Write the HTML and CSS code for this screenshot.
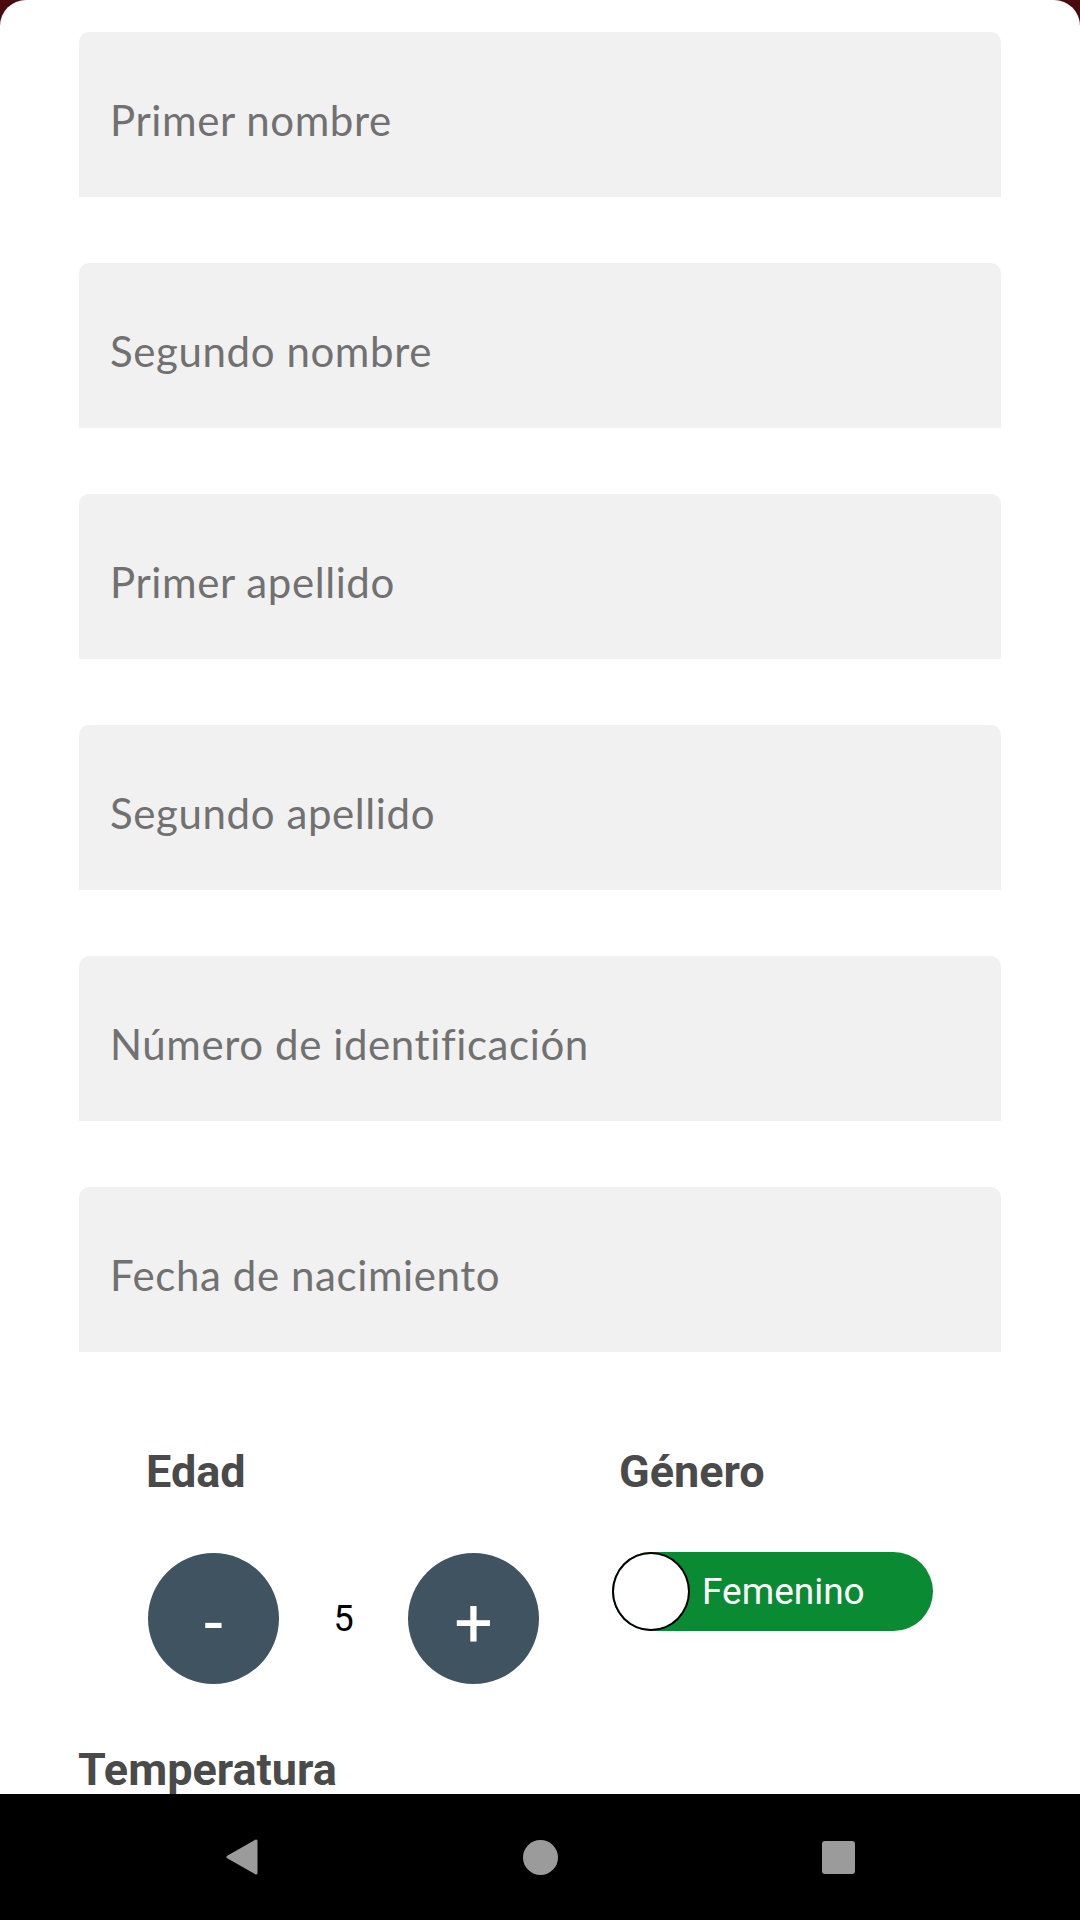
FILE: index.html
```html
<!DOCTYPE html>
<html lang="es">
<head>
<meta charset="utf-8">
<title>Formulario</title>
<link rel="stylesheet" href="styles.css">
</head>
<body>
<div class="screen">
  <main class="card">
    <div class="fields">
      <div class="field"><span class="placeholder">Primer nombre</span></div>
      <div class="field"><span class="placeholder">Segundo nombre</span></div>
      <div class="field"><span class="placeholder">Primer apellido</span></div>
      <div class="field"><span class="placeholder">Segundo apellido</span></div>
      <div class="field"><span class="placeholder">Número de identificación</span></div>
      <div class="field"><span class="placeholder">Fecha de nacimiento</span></div>
    </div>
    <section class="row">
      <div class="col col-age">
        <h2 class="label label-age">Edad</h2>
        <div class="stepper">
          <div class="circle-btn minus">-</div>
          <span class="value">5</span>
          <div class="circle-btn plus">+</div>
        </div>
      </div>
      <div class="col col-gender">
        <h2 class="label label-gender">Género</h2>
        <div class="toggle">
          <span class="knob"></span>
          <span class="toggle-text">Femenino</span>
        </div>
      </div>
    </section>
    <h2 class="label label-temp">Temperatura</h2>
  </main>
  <nav class="navbar">
    <span class="nav-item">
      <svg width="36" height="40" viewBox="0 0 36 40"><polygon points="32,4 32,36 4,20" fill="#9b9b9b" stroke="#9b9b9b" stroke-width="3" stroke-linejoin="round"/></svg>
    </span>
    <span class="nav-item"><span class="home-dot"></span></span>
    <span class="nav-item"><span class="recent-sq"></span></span>
  </nav>
</div>
</body>
</html>
```

FILE: styles.css
```css
html, body {
  margin: 0;
  padding: 0;
}
body {
  background: #4a0b0c;
  width: 1080px;
  height: 1920px;
  overflow: hidden;
}
.screen {
  width: 1080px;
  height: 1920px;
  display: flex;
  flex-direction: column;
}
.card {
  height: 1794px;
  box-sizing: border-box;
  background: #ffffff;
  border-radius: 26px 26px 0 0;
  padding: 32px 79px 0 79px;
  overflow: hidden;
}
.fields {
  display: flex;
  flex-direction: column;
  gap: 66px;
}
.field {
  height: 165px;
  box-sizing: border-box;
  background: #f1f1f1;
  border-radius: 10px 10px 0 0;
  padding: 63px 0 0 31px;
}
.placeholder {
  display: block;
  font-family: Lato, "Noto Sans", sans-serif;
  font-size: 42px;
  line-height: 50px;
  letter-spacing: 0.6px;
  color: #717171;
}
.row {
  display: grid;
  grid-template-columns: 464px auto;
  padding-left: 69px;
  margin-top: 93px;
}
.label {
  margin: 0;
  font-family: Roboto, "Liberation Sans", sans-serif;
  font-weight: 700;
  font-size: 45px;
  line-height: 53px;
  color: #4a4a4a;
}
.label-age {
  margin-left: -2px;
}
.label-gender {
  margin-left: 7px;
}
.stepper {
  display: flex;
  align-items: center;
  margin-top: 55px;
}
.circle-btn {
  width: 131px;
  height: 131px;
  box-sizing: border-box;
  padding-top: 9px;
  border-radius: 50%;
  background: #3f5361;
  color: #ffffff;
  display: flex;
  align-items: center;
  justify-content: center;
  font-family: Roboto, "Liberation Sans", sans-serif;
  font-size: 68px;
  line-height: 1;
}
.value {
  width: 129px;
  text-align: center;
  font-family: Roboto, "Liberation Sans", sans-serif;
  font-size: 36px;
  color: #000000;
}
.toggle {
  position: relative;
  margin-top: 54px;
  width: 321px;
  height: 79px;
  border-radius: 40px;
  background: #0a8a33;
  display: flex;
  align-items: center;
  box-sizing: border-box;
  padding-left: 90px;
}
.knob {
  position: absolute;
  left: 0;
  top: 0;
  width: 78px;
  height: 79px;
  box-sizing: border-box;
  border-radius: 50%;
  background: #ffffff;
  border: 2.5px solid #000000;
}
.toggle-text {
  font-family: Roboto, "Liberation Sans", sans-serif;
  font-size: 37px;
  color: #ffffff;
}
.label-temp {
  margin-top: 59px;
  margin-left: -1px;
}
.navbar {
  height: 126px;
  background: #000000;
  display: flex;
  align-items: center;
  justify-content: center;
  gap: 238px;
}
.nav-item {
  width: 60px;
  height: 60px;
  display: flex;
  align-items: center;
  justify-content: center;
}
.home-dot {
  width: 35px;
  height: 35px;
  border-radius: 50%;
  background: #9b9b9b;
}
.recent-sq {
  width: 33px;
  height: 33px;
  border-radius: 3px;
  background: #9b9b9b;
}
```
